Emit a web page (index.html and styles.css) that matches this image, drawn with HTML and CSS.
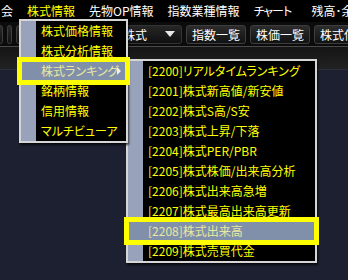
FILE: index.html
```html
<!DOCTYPE html>
<html lang="ja">
<head>
    <meta charset="UTF-8">
    <title>株式情報メニュー</title>
    <link rel="stylesheet" href="styles.css">
</head>
<body>
    <div class="menubar">
        <span class="mb-item">会</span>
        <span class="mb-item active">株式情報</span>
        <span class="mb-item">先物OP情報</span>
        <span class="mb-item">指数業種情報</span>
        <span class="mb-item chart">チャート</span>
        <span class="mb-item last">残高･余</span>
    </div>

    <div class="toolbar">
        <span class="tb-btn edge"></span>
        <span class="tb-btn edge-small"></span>
        <span class="tb-btn hidden-btn"></span>
        <span class="combo">
            <span class="combo-text">株式</span>
            <span class="combo-arrow"></span>
        </span>
        <span class="tb-btn">指数一覧</span>
        <span class="tb-btn">株価一覧</span>
        <span class="tb-btn">株式信用</span>
    </div>
    <div class="strip"></div>

    <ul class="menu main-menu">
        <li>株式価格情報</li>
        <li>株式分析情報</li>
        <li class="selected has-sub">株式ランキング</li>
        <li>銘柄情報</li>
        <li>信用情報</li>
        <li>マルチビューア</li>
    </ul>

    <ul class="menu sub-menu">
        <li>[2200]リアルタイムランキング</li>
        <li>[2201]株式新高値/新安値</li>
        <li>[2202]株式S高/S安</li>
        <li>[2203]株式上昇/下落</li>
        <li>[2204]株式PER/PBR</li>
        <li>[2205]株式株価/出来高分析</li>
        <li>[2206]株式出来高急増</li>
        <li>[2207]株式最高出来高更新</li>
        <li class="selected">[2208]株式出来高</li>
        <li>[2209]株式売買代金</li>
    </ul>
</body>
</html>
```

FILE: styles.css
```css
body {
    margin: 0;
    width: 348px;
    height: 280px;
    overflow: hidden;
    position: relative;
    background-color: #1c2031;
    font-family: "Noto Sans CJK JP", "Noto Sans", sans-serif;
    font-size: 12px;
    font-feature-settings: "palt";
}
.menubar {
    display: flex;
    gap: 14px;
    height: 22px;
    line-height: 22px;
    padding-left: 1px;
    background-color: #000;
    color: #fff;
    white-space: nowrap;
    overflow: hidden;
}
.mb-item {
    flex-shrink: 0;
}
.mb-item.active {
    color: #ffff00;
}
.mb-item.chart {
    width: 36px;
    letter-spacing: -1px;
}
.mb-item.last {
    margin-left: 8px;
}
.toolbar {
    display: flex;
    align-items: center;
    gap: 4px;
    height: 24px;
    background-color: #0c0c0c;
    white-space: nowrap;
    overflow: hidden;
}
.tb-btn {
    flex-shrink: 0;
    height: 19px;
    line-height: 17px;
    padding: 0 5px;
    box-sizing: border-box;
    color: #fff;
    background: linear-gradient(#2c2c2c, #121212);
    border: 1px solid #3e3e3e;
    border-radius: 3px;
}
.tb-btn.edge {
    width: 14px;
    margin-left: -11px;
}
.tb-btn.edge-small {
    width: 5px;
    padding: 0;
}
.tb-btn.hidden-btn {
    width: 96px;
}
.combo {
    flex-shrink: 0;
    display: flex;
    align-items: center;
    width: 66px;
    height: 19px;
    box-sizing: border-box;
    background: linear-gradient(#262626, #101010);
    border: 1px solid #333;
    border-radius: 3px;
    color: #fff;
}
.combo-text {
    flex: 1;
    padding-left: 6px;
}
.combo-arrow {
    width: 0;
    height: 0;
    margin-right: 6px;
    border-top: 6px solid #e8e8e8;
    border-left: 5px solid transparent;
    border-right: 5px solid transparent;
}
.strip {
    height: 22px;
    border-top: 1px solid #4a4a4a;
    border-bottom: 1px solid #2a2e3c;
    background: linear-gradient(#151515, #222);
}
.menu {
    position: absolute;
    margin: 0;
    padding: 0;
    list-style: none;
    background: linear-gradient(to right, #98a2ba 15px, #000 15px);
    border: 2px solid #d6d6d6;
    box-shadow: 1px 2px 2px rgba(0, 0, 0, 0.7);
}
.menu li {
    position: relative;
    height: 20px;
    line-height: 20px;
    padding-left: 20px;
    color: #ffff00;
    white-space: nowrap;
}
.menu li.selected {
    background-color: #8190aa;
    color: #e8e8a0;
    outline: 5px solid #ffff00;
    outline-offset: -1px;
}
.menu li.has-sub::after {
    content: "";
    position: absolute;
    right: 5px;
    top: 6px;
    border-left: 4px solid #f0f0f0;
    border-top: 4px solid transparent;
    border-bottom: 4px solid transparent;
}
.main-menu {
    left: 19px;
    top: 19px;
    width: 105px;
    z-index: 2;
}
.sub-menu {
    left: 126px;
    top: 59px;
    width: 187px;
    z-index: 1;
}
```
